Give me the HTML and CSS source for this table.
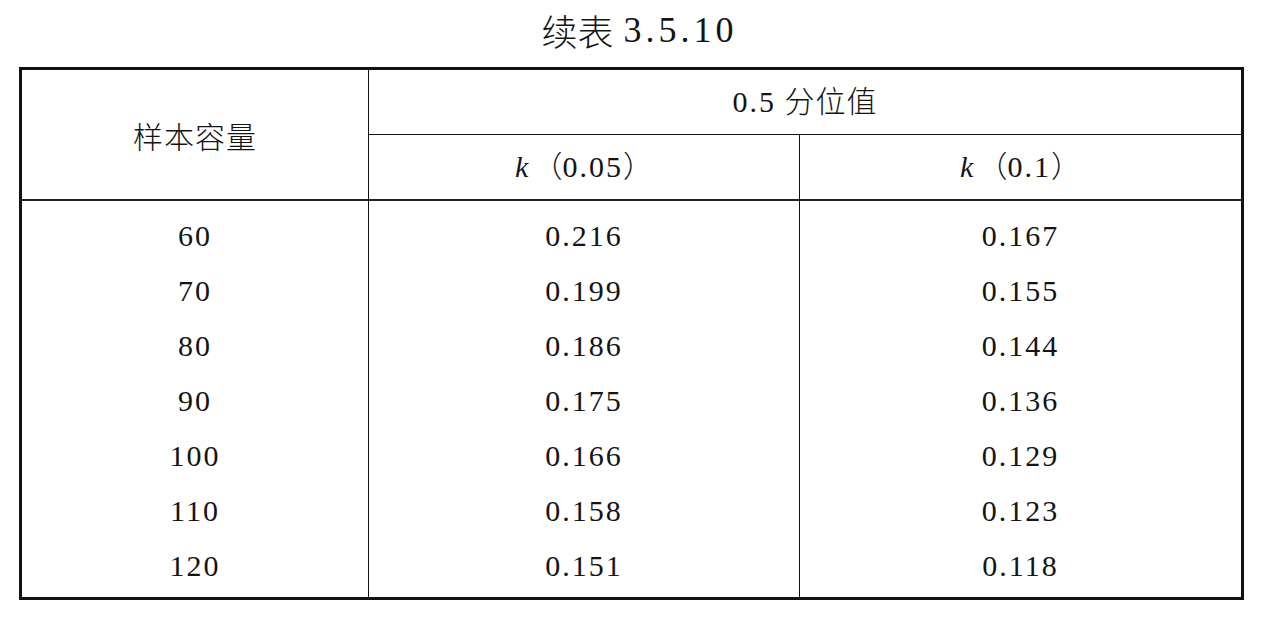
FILE: index.html
```html
<!DOCTYPE html>
<html lang="zh-CN">
<head>
<meta charset="utf-8">
<title>续表 3.5.10</title>
<link rel="stylesheet" href="styles.css">
</head>
<body>
<div class="page">
  <div class="caption">续表<span class="num">3.5.10</span></div>
  <table class="data">
    <colgroup>
      <col class="c1"><col class="c2"><col class="c3">
    </colgroup>
    <thead>
      <tr>
        <th rowspan="2" class="h-size">样本容量</th>
        <th colspan="2" class="h-group"><span class="num">0.5</span> 分位值</th>
      </tr>
      <tr>
        <th class="h-sub sep"><i class="k">k</i>（<span class="num">0.05</span>）</th>
        <th class="h-sub"><i class="k">k</i>（<span class="num">0.1</span>）</th>
      </tr>
    </thead>
    <tbody>
      <tr class="first"><td class="sep">60</td><td class="sep">0.216</td><td>0.167</td></tr>
      <tr><td class="sep">70</td><td class="sep">0.199</td><td>0.155</td></tr>
      <tr><td class="sep">80</td><td class="sep">0.186</td><td>0.144</td></tr>
      <tr><td class="sep">90</td><td class="sep">0.175</td><td>0.136</td></tr>
      <tr><td class="sep">100</td><td class="sep">0.166</td><td>0.129</td></tr>
      <tr><td class="sep">110</td><td class="sep">0.158</td><td>0.123</td></tr>
      <tr class="last"><td class="sep">120</td><td class="sep">0.151</td><td>0.118</td></tr>
    </tbody>
  </table>
</div>
</body>
</html>
```

FILE: styles.css
```css
html, body {
  margin: 0;
  padding: 0;
  background: #ffffff;
}

body {
  font-family: "Liberation Serif", "Noto Sans CJK SC", serif;
  color: #141414;
}

.page {
  width: 1279px;
}

.caption {
  height: 67px;
  box-sizing: border-box;
  padding-bottom: 7px;
  display: flex;
  align-items: center;
  justify-content: center;
  font-size: 36px;
  font-weight: 300;
  font-family: "Liberation Serif", "Noto Sans CJK SC", serif;
}

.caption .num {
  margin-left: 10px;
  font-size: 36px;
  font-weight: 400;
  letter-spacing: 4px;
}

.num {
  letter-spacing: 2px;
}

.data {
  margin-left: 19px;
  width: 1225px;
  border: 3px solid #111111;
  border-spacing: 0;
  border-collapse: separate;
  table-layout: fixed;
  font-size: 30px;
}

.c1 { width: 347px; }
.c2 { width: 431px; }
.c3 { width: 441px; }

.data th {
  font-weight: 300;
  padding: 0;
  text-align: center;
  vertical-align: middle;
}

.h-size {
  border-right: 1px solid #111111;
  border-bottom: 2px solid #222222;
  letter-spacing: 1px;
}

.h-group {
  line-height: 64px;
  border-bottom: 1px solid #111111;
  letter-spacing: 1px;
}

.h-sub {
  line-height: 64px;
  border-bottom: 2px solid #222222;
}

.k {
  font-style: italic;
  font-family: "Liberation Serif", serif;
  margin-right: 4px;
}

.data td {
  padding: 0;
  line-height: 55px;
  text-align: center;
  letter-spacing: 2px;
}

.sep {
  border-right: 1px solid #111111;
}

.data tr.first td {
  padding-top: 7px;
}

.data tr.last td {
  padding-bottom: 4px;
}
```
